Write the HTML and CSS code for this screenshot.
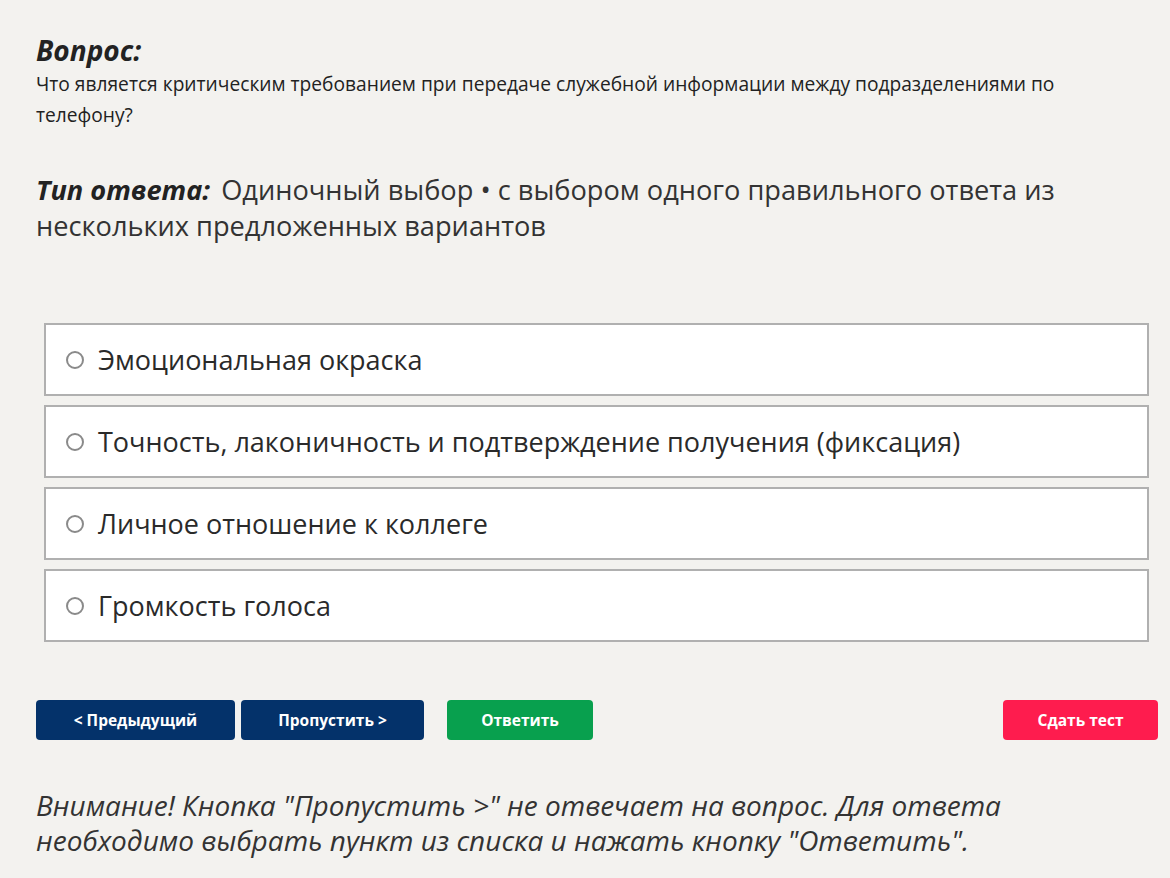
FILE: index.html
```html
<!DOCTYPE html>
<html lang="ru">
<head>
<meta charset="UTF-8">
<meta name="viewport" content="width=device-width, initial-scale=1.0">
<title>Тест</title>
<link rel="stylesheet" href="styles.css">
</head>
<body>

<div class="quiz">
  <div class="question">
    <h2>Вопрос:</h2>
    <p>Что является критическим требованием при передаче служебной информации между подразделениями по телефону?</p>
  </div>

  <div class="answer-type">
    <b>Тип ответа:</b> Одиночный выбор • с выбором одного правильного ответа из нескольких предложенных вариантов
  </div>

  <form id="answerForm" class="options">
    <label class="option"><input type="radio" name="answer" value="1"> Эмоциональная окраска</label>
    <label class="option"><input type="radio" name="answer" value="2"> Точность, лаконичность и подтверждение получения (фиксация)</label>
    <label class="option"><input type="radio" name="answer" value="3"> Личное отношение к коллеге</label>
    <label class="option"><input type="radio" name="answer" value="4"> Громкость голоса</label>
  </form>

  <div class="buttons">
    <button type="button" class="btn btn-nav btn-prev">&lt; Предыдущий</button>
    <button type="button" class="btn btn-nav btn-skip">Пропустить &gt;</button>
    <button type="button" class="btn btn-answer">Ответить</button>
    <button type="button" class="btn btn-finish">Сдать тест</button>
  </div>

  <p class="warning">Внимание! Кнопка "Пропустить &gt;" не отвечает на вопрос. Для ответа необходимо выбрать пункт из списка и нажать кнопку "Ответить".</p>
</div>

</body>
</html>
```

FILE: styles.css
```css
body {
  font-family: 'Open Sans', 'Noto Sans', sans-serif;
  background: #f3f2ef;
  color: #222;
  margin: 0;
  padding: 32px 12px 20px 36px;
}

.question h2 {
  margin: 0;
  font-size: 28px;
  font-style: italic;
  font-weight: 700;
  line-height: 36px;
}
.question p {
  max-width: 1060px;
  margin: 0;
  font-size: 19.2px;
  line-height: 31px;
}

.answer-type {
  margin-top: 42px;
  font-size: 27.2px;
  line-height: 36px;
  color: #333;
}
.answer-type b {
  display: inline-block;
  margin-right: 4px;
  font-style: italic;
  color: #222;
}

.options {
  display: flex;
  flex-direction: column;
  gap: 9px;
  margin: 79px 9px 0 8px;
}
.option {
  display: flex;
  align-items: center;
  gap: 14px;
  height: 73px;
  box-sizing: border-box;
  padding: 0 20px;
  background: #fff;
  border: 2px solid #b0b0b0;
  font-size: 27px;
  color: #2a2a2a;
  cursor: pointer;
}
.option input {
  appearance: none;
  width: 18px;
  height: 18px;
  margin: 0;
  border: 2px solid #8a8a8a;
  border-radius: 50%;
  background: #fff;
}

.buttons {
  display: flex;
  margin-top: 58px;
}
.btn {
  height: 40px;
  border: none;
  border-radius: 4px;
  color: #fff;
  font-family: 'Open Sans', 'Noto Sans', sans-serif;
  font-size: 15.5px;
  font-weight: 700;
  cursor: pointer;
}
.btn-nav {
  background-color: #04326a;
}
.btn-prev {
  width: 199px;
}
.btn-skip {
  width: 183px;
  margin-left: 6px;
}
.btn-answer {
  width: 146px;
  margin-left: 23px;
  background-color: #08a04e;
}
.btn-finish {
  width: 155px;
  margin-left: auto;
  background-color: #fe1c4e;
}

.warning {
  margin: 48px 0 0;
  font-size: 28px;
  font-style: italic;
  line-height: 35px;
  color: #333;
}
```
